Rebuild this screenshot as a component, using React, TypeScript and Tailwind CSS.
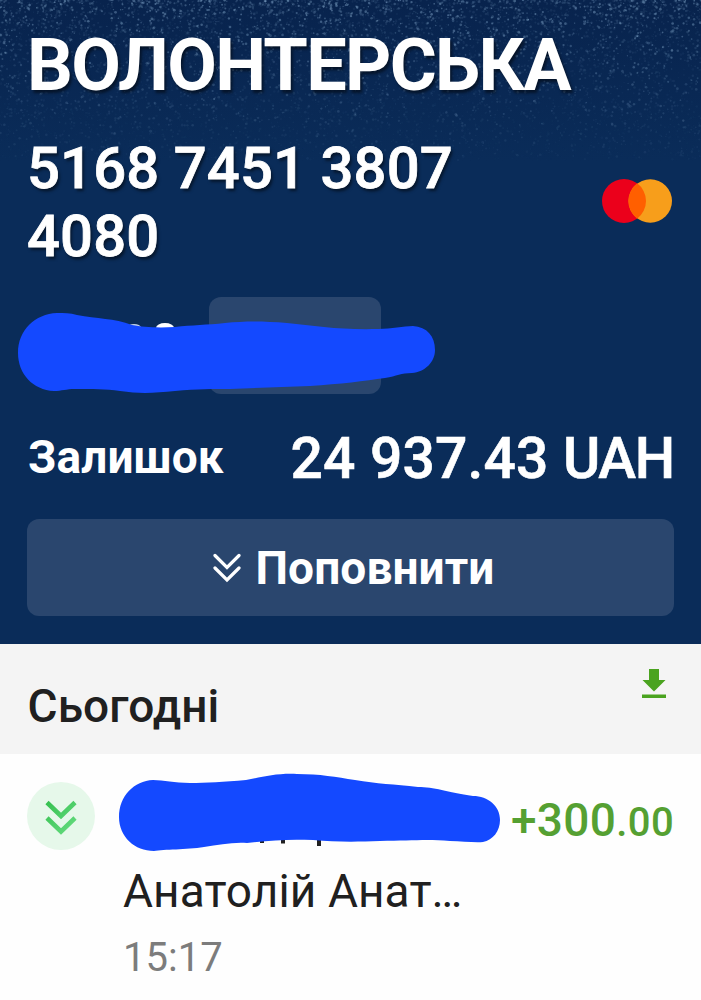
import React from 'react';

// Deterministic pseudo random dots
const makeStars = (count: number) => {
  let seed = 41;
  const next = () => {
    seed = (seed * 16807) % 2147483647;
    return seed / 2147483647;
  };
  return Array.from({ length: count }, () => {
    const depth = Math.pow(next(), 1.35);
    return {
      x: next() * 701,
      y: depth * 160,
      r: 0.6 + next() * 0.8,
      opacity: (0.07 + Math.pow(next(), 3) * 0.42) * (1 - depth * 0.88),
    };
  });
};

const stars = makeStars(7500);

const StarNoise: React.FC = () => (
  <svg className="absolute inset-0 h-[180px] w-full" viewBox="0 0 701 180">
    {stars.map((s, i) => (
      <circle key={i} cx={s.x} cy={s.y} r={s.r} fill="#8fb4d6" opacity={s.opacity} />
    ))}
  </svg>
);

const Mastercard: React.FC = () => (
  <svg className="-mt-[2px]" width="70" height="44" viewBox="0 0 70 44">
    <circle cx="22" cy="22" r="22" fill="#eb001b" />
    <circle cx="48.3" cy="22" r="21.7" fill="#f79e1b" />
    <path d="M35.15 4.36a22 22 0 0 1 0 35.28a22 22 0 0 1 0-35.28z" fill="#ff5f00" />
  </svg>
);

const App: React.FC = () => {
  return (
    <div className="h-[1000px] w-[701px] overflow-hidden bg-[#fefefe] font-['Roboto',sans-serif]">
      {/* Card */}
      <header className="relative h-[643.5px] bg-[#0a2b59] bg-linear-to-b from-[#08234d] to-[#0a2c59] to-25% px-[27px] pt-[24px] text-white">
        <StarNoise />
        <div className="relative">
          <h1 className="text-[72px] leading-[84px] font-bold tracking-[-1.7px] text-shadow-[2px_3px_3px_rgba(0,0,0,0.5)]">
            ВОЛОНТЕРСЬКА
          </h1>

          <div className="mt-[26px] flex items-center justify-between pr-[2.5px]">
            <p className="w-[450px] text-[58px] leading-[68px] font-medium tracking-[0.1px] text-shadow-[2px_3px_3px_rgba(0,0,0,0.5)] [-webkit-text-stroke:0.8px_white]">
              5168 7451 3807 4080
            </p>
            <Mastercard />
          </div>

          {/* Hidden row */}
          <div className="relative mt-[27px] flex h-[97px] pl-[182px]">
            <div className="h-full w-[172px] rounded-[12px] bg-[#2a466e]" />
            <svg className="absolute top-0 -left-[27px]" width="450" height="110" viewBox="0 297 450 110">
              <ellipse cx="134" cy="327.5" rx="7" ry="3.5" fill="#c3d2e6" />
              <ellipse cx="165" cy="328" rx="9" ry="5" fill="#fff" />
              <path
                d="M57 313C35 314 18 330 18 353C18 374 33 390 54 391C62 391 66 389 75 389C93 389 105 389 120 391C140 394 155 393 175 391C198 389 213 389 230 389C257 388 284 387 310 386C340 384 365 381 385 378C397 376 401 373 412 373C425 372 435 362 435 350C435 336 427 327 413 326C403 326 392 329 378 329C340 330 315 326 287 323C263 321 245 321 225 323C207 325 192 325 175 327C156 328 143 327 132 325C114 318 97 319 77 315C70 313 64 313 57 313Z"
                fill="#1449ff"
              />
            </svg>
          </div>

          <div className="mt-[31px] flex h-[68px] items-center justify-between">
            <span className="relative -top-[2px] ml-px text-[46px] leading-[54px] font-bold tracking-[0.1px]">Залишок</span>
            <span className="text-[57px] leading-[68px] font-medium tracking-[0.15px] [-webkit-text-stroke:0.6px_white]">
              24 937.43 <span className="tracking-[-1.3px]">UAH</span>
            </span>
          </div>

          <button className="mt-[26px] flex h-[97px] w-full items-center justify-center gap-[14px] rounded-[12px] bg-[#2a466e] pl-[7px] text-[46px] leading-[54px] font-bold tracking-[0.1px]">
            <svg width="28" height="30" viewBox="0 0 28 30" fill="none" stroke="#fff" strokeWidth="3.2" strokeLinecap="round">
              <path d="M2 2.5L14 14.5L26 2.5M2 15L14 27L26 15" />
            </svg>
            Поповнити
          </button>
        </div>
      </header>

      {/* Day */}
      <div className="flex h-[110.5px] justify-between bg-[#f4f4f4] pr-[35.5px] pl-[27.5px]">
        <h2 className="mt-[35px] text-[46px] leading-[54px] font-medium tracking-[0.1px] text-[#202020]">Сьогодні</h2>
        <svg className="mt-[25px]" width="24" height="30" viewBox="0 0 24 30" fill="#4aa31f">
          <path d="M7 0h10v11h6.5L12 22.5L0.5 11H7zM0 25.5h24v3.5H0z" />
        </svg>
      </div>

      {/* Transaction */}
      <div className="flex px-[27px] pt-[28px]">
        <div className="flex size-[68px] items-center justify-center rounded-full bg-[#e6f8ea]">
          <svg className="mt-[4px]" width="32" height="36" viewBox="0 0 32 36" fill="none" stroke="url(#chevron)" strokeWidth="4.6">
            <defs>
              <linearGradient id="chevron" x1="0" y1="0" x2="1" y2="1">
                <stop offset="0" stopColor="#37c151" />
                <stop offset="1" stopColor="#66dc80" />
              </linearGradient>
            </defs>
            <path d="M2 2.5L16 16L30 2.5M2 18L16 31.5L30 18" />
          </svg>
        </div>
        <div className="relative ml-[28px] flex-1">
          <div className="flex h-[78px] items-center justify-end">
            <svg className="absolute -top-[12px] -left-[7px]" width="390" height="90" viewBox="116 770 390 90">
              <path d="M260 838h4v5h-4zM281 838h4v5.5h-4zM317 838h4v8h-4z" fill="#202020" />
              <path
                d="M153 780C134 781 119 796 119 817C119 837 135 851 154 851C164 849 186 850 204 847C219 845 232 842 247 843C271 840 290 839 313 840C335 842 355 842 380 841C410 841 425 839 450 841C462 841 475 843 483 842C493 840 500 831 500 820C500 806 488 796 473 796C447 792 434 787 418 787C394 784 377 784 355 780C336 777 320 774 297 774C277 773 262 777 246 780C224 782 206 783 190 783C174 783 164 780 153 780Z"
                fill="#1449ff"
              />
            </svg>
            <span className="text-[46px] leading-[54px] font-medium tracking-[0.35px] text-[#55a032]">
              +300<span className="text-[40px]">.00</span>
            </span>
          </div>
          <p className="mt-[4px] text-[46px] leading-[54px] tracking-[0.1px] text-[#202020]">Анатолій Анат…</p>
          <p className="mt-[16px] text-[40px] leading-[48px] text-[#7c7c7c]">15:17</p>
        </div>
      </div>
    </div>
  );
};

export default App;
